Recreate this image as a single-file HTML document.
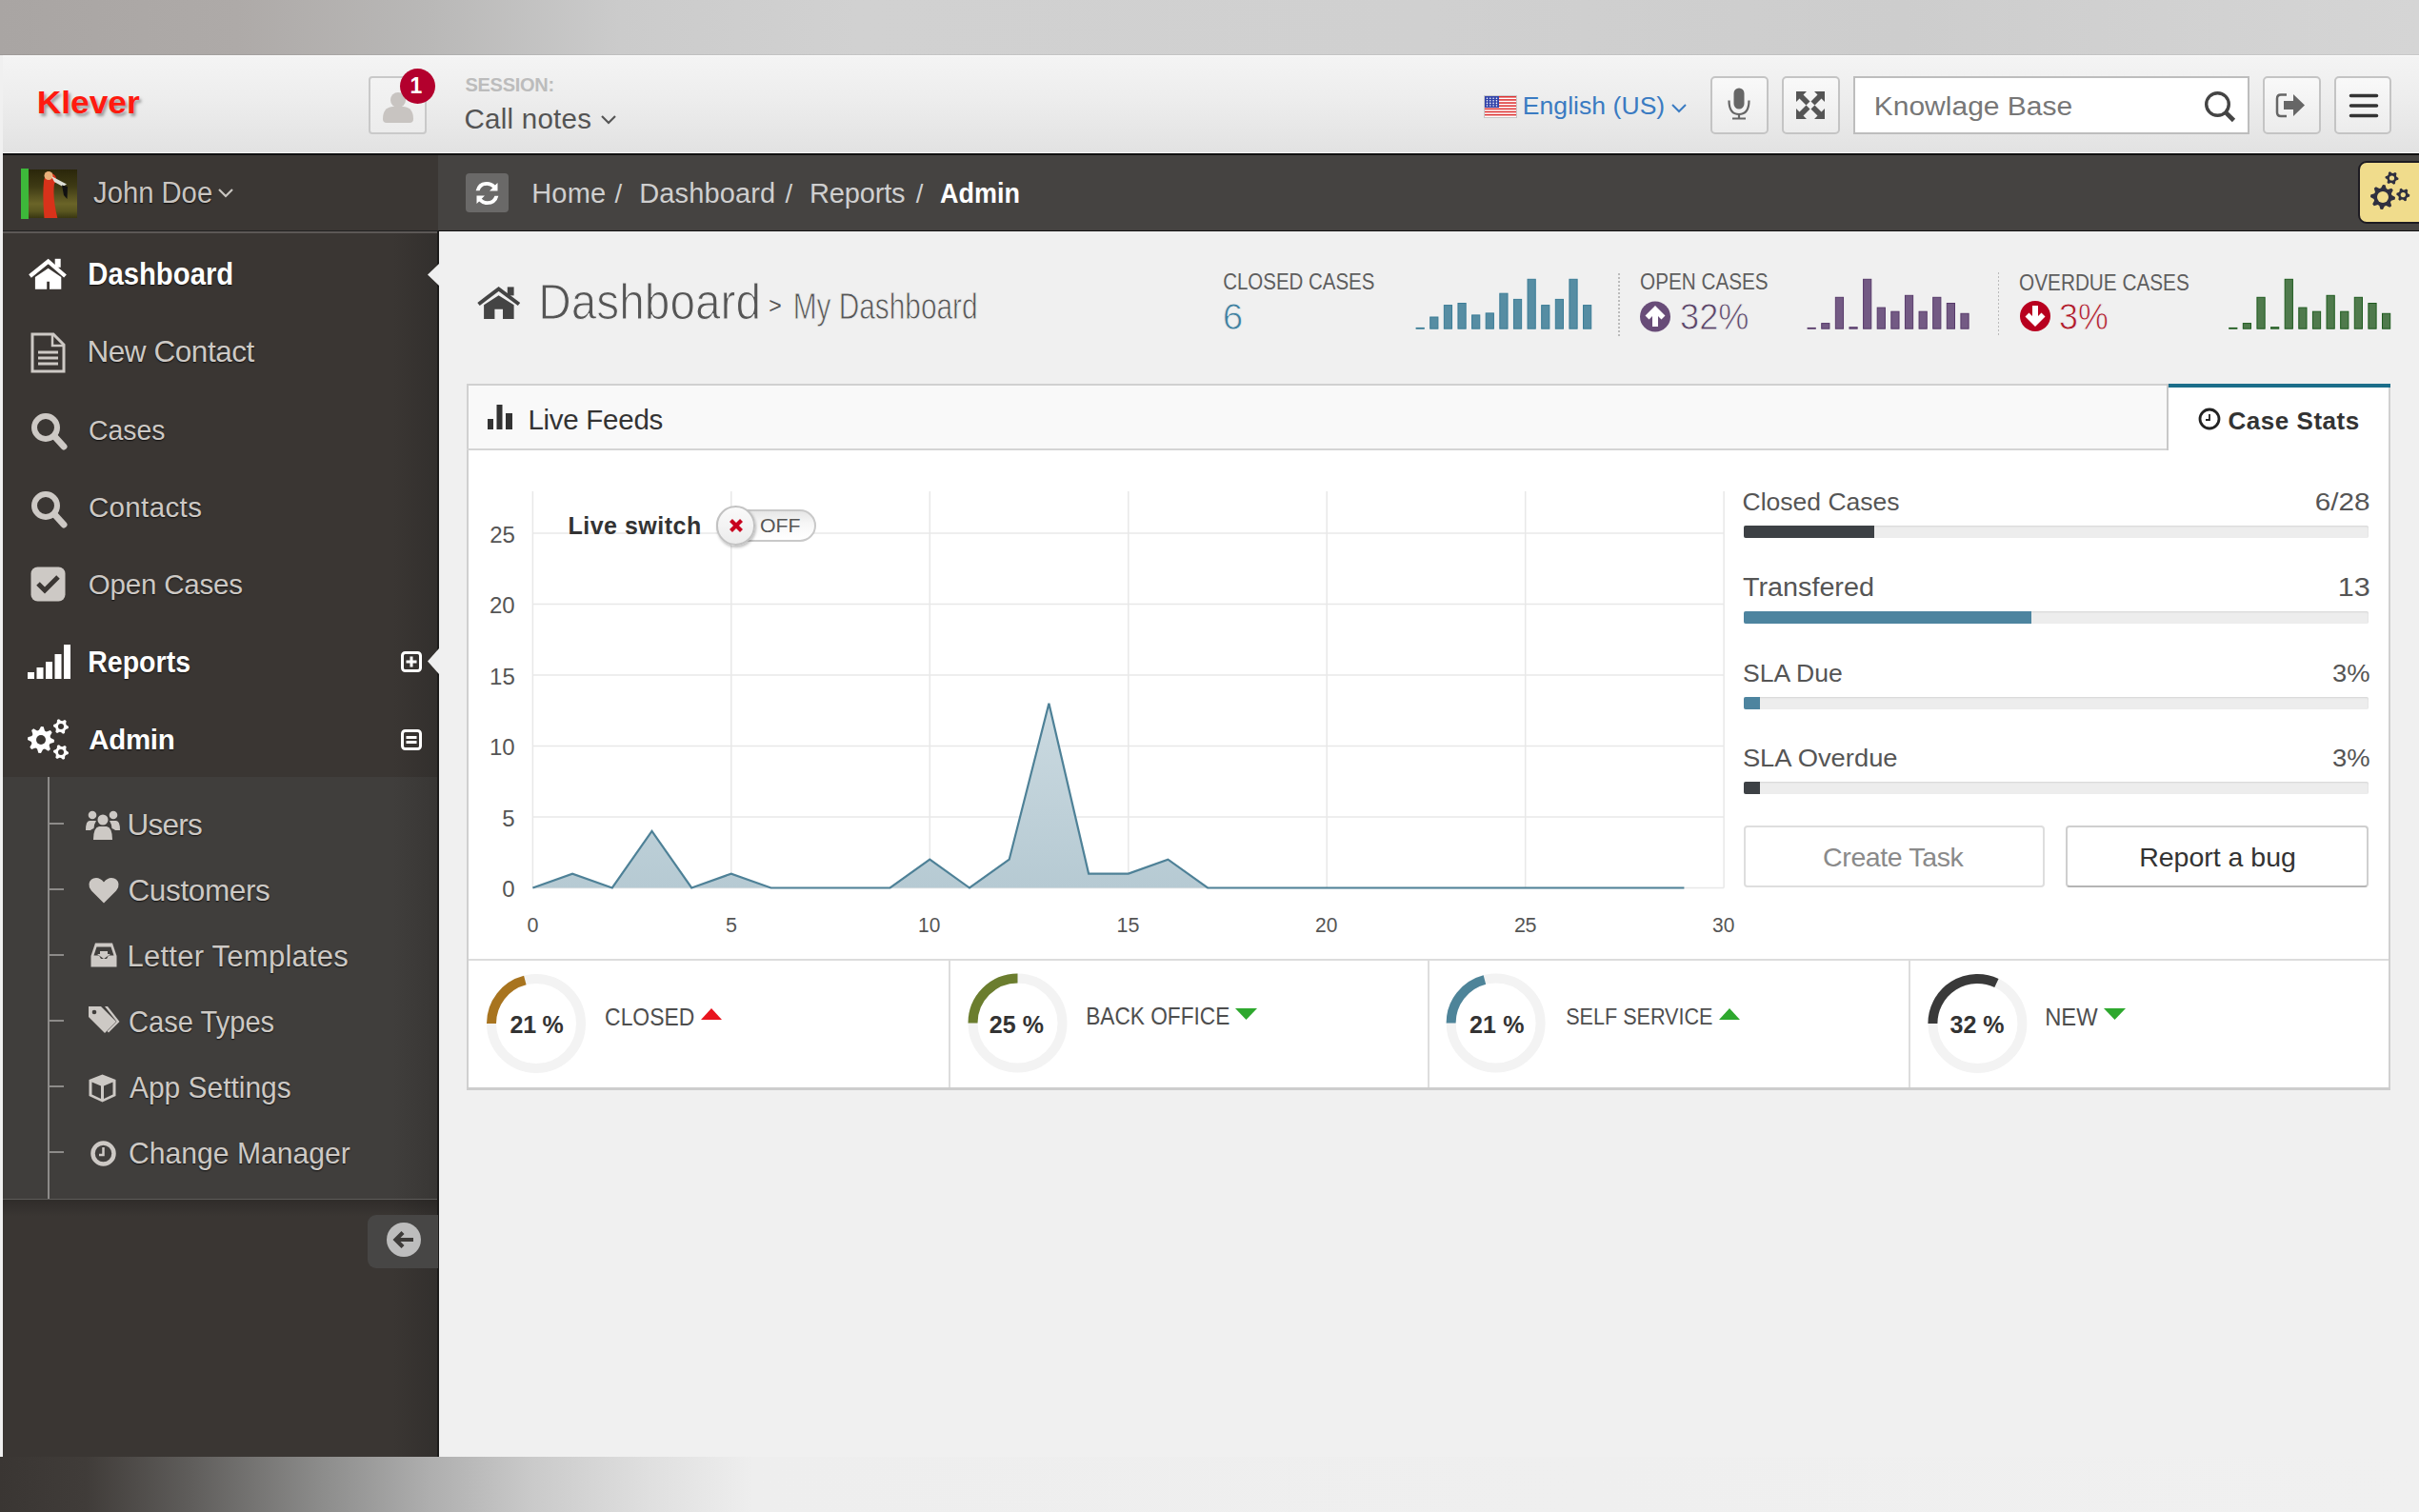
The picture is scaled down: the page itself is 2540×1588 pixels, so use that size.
<!DOCTYPE html><html><head><meta charset="utf-8"><style>
html,body{margin:0;padding:0;}
body{width:2540px;height:1588px;position:relative;overflow:hidden;background:#f0f0f0;font-family:"Liberation Sans",sans-serif;}
body>div,body>span,body>svg{position:absolute;}
span{line-height:1;white-space:nowrap;}
</style></head><body>
<div style="left:0px;top:0px;width:2540px;height:58px;background:linear-gradient(90deg,#a9a5a3 0px,#aeaaa8 250px,#b9b8b7 450px,#cbcbcb 650px,#d1d1d1 900px,#d0d0d0 1500px,#cdcdcd 2000px,#d5d5d5 2540px);"></div>
<div style="left:0px;top:57px;width:2540px;height:1px;background:rgba(0,0,0,0.06);"></div>
<div style="left:0px;top:58px;width:2540px;height:103px;background:linear-gradient(#f4f4f4,#ededed 45%,#e2e2e2);"></div>
<div style="left:0px;top:58px;width:2540px;height:1px;background:#fbfbfb;"></div>
<div style="left:0px;top:159.5px;width:2540px;height:1.5px;background:#f4f4f4;"></div>
<div style="left:0px;top:58px;width:3px;height:1472px;background:#f0f0f0;"></div>
<div style="left:3px;top:161px;width:457px;height:82px;background:#3b3734;"></div>
<div style="left:460px;top:161px;width:2080px;height:82px;background:#454341;"></div>
<div style="left:3px;top:161px;width:2537px;height:2px;background:#111;"></div>
<div style="left:460px;top:242px;width:2080px;height:1px;background:#111;"></div>
<div style="left:3px;top:242px;width:457px;height:1px;background:#222;"></div>
<div style="left:3px;top:243px;width:457px;height:2px;background:#5c5856;"></div>
<div style="left:3px;top:245px;width:457px;height:1285px;background:linear-gradient(90deg,#3a3633 0,#3a3633 410px,#322f2d 458px);"></div>
<div style="left:3px;top:816px;width:457px;height:443px;background:linear-gradient(90deg,#403e3c 0,#403e3c 410px,#383634 458px);"></div>
<div style="left:3px;top:1259px;width:457px;height:1px;background:#5d5b59;"></div>
<div style="left:3px;top:1260px;width:456px;height:18px;background:linear-gradient(rgba(0,0,0,0.18),rgba(0,0,0,0));"></div>
<div style="left:459px;top:243px;width:2px;height:1287px;background:#1c1b1a;"></div>
<div style="left:0px;top:1530px;width:2540px;height:58px;background:linear-gradient(90deg,#3a3633 0px,#403c39 90px,#5f5d5b 200px,#8d8d8c 340px,#aeaeae 450px,#cacaca 560px,#dfdfdf 680px,#eeeeee 790px,#f0f0f0 2540px);"></div>
<span style="left:38.8px;top:92px;font-size:32.5px;letter-spacing:0.00px;font-weight:bold;color:#ff1a0f;transform:scaleX(1.0853);transform-origin:2.25px 0;text-shadow:2px 3px 3px rgba(0,0,0,0.35);">Klever</span>
<div style="left:387px;top:80px;width:61px;height:61px;box-sizing:border-box;border:2px solid #c9c9c9;border-radius:4px;background:linear-gradient(#f3f3f3,#ececec);"></div>
<svg style="left:400px;top:95px;" width="36" height="36" viewBox="0 0 36 36"><circle cx="18" cy="10" r="8" fill="#c8c4c1"/><path d="M2 30 Q2 18 12 17 L24 17 Q34 18 34 30 Q34 34 30 34 L6 34 Q2 34 2 30Z" fill="#c8c4c1"/></svg>
<div style="left:419.5px;top:71.5px;width:37px;height:37px;border-radius:50%;background:#b3002d;"></div>
<span style="left:430.5px;top:79px;font-size:23.0px;letter-spacing:0.00px;font-weight:bold;color:#fff;">1</span>
<span style="left:488.5px;top:79px;font-size:20.0px;letter-spacing:-0.29px;font-weight:bold;color:#bcbcbc;">SESSION:</span>
<span style="left:487.5px;top:110px;font-size:29.5px;letter-spacing:0.25px;font-weight:normal;color:#545454;">Call notes</span>
<svg style="left:630px;top:119px;" width="18" height="13" viewBox="0 0 18 13"><path d="M2 3 L9 10 L16 3" stroke="#555" stroke-width="2.2" fill="none"/></svg>
<svg style="left:1559px;top:101px;box-shadow:0 0 0 1px rgba(0,0,0,0.15);" width="33" height="22" viewBox="0 0 33 22"><rect width="33" height="22" fill="#fff"/><rect y="0.00" width="33" height="1.57" fill="#d33"/><rect y="3.14" width="33" height="1.57" fill="#d33"/><rect y="6.29" width="33" height="1.57" fill="#d33"/><rect y="9.43" width="33" height="1.57" fill="#d33"/><rect y="12.57" width="33" height="1.57" fill="#d33"/><rect y="15.71" width="33" height="1.57" fill="#d33"/><rect y="18.86" width="33" height="1.57" fill="#d33"/><rect width="15" height="12" fill="#3344aa"/><circle cx="2.5" cy="2.2" r="0.8" fill="#fff"/><circle cx="5.8" cy="2.2" r="0.8" fill="#fff"/><circle cx="9.1" cy="2.2" r="0.8" fill="#fff"/><circle cx="12.4" cy="2.2" r="0.8" fill="#fff"/><circle cx="2.5" cy="4.8" r="0.8" fill="#fff"/><circle cx="5.8" cy="4.8" r="0.8" fill="#fff"/><circle cx="9.1" cy="4.8" r="0.8" fill="#fff"/><circle cx="12.4" cy="4.8" r="0.8" fill="#fff"/><circle cx="2.5" cy="7.4" r="0.8" fill="#fff"/><circle cx="5.8" cy="7.4" r="0.8" fill="#fff"/><circle cx="9.1" cy="7.4" r="0.8" fill="#fff"/><circle cx="12.4" cy="7.4" r="0.8" fill="#fff"/><circle cx="2.5" cy="10.0" r="0.8" fill="#fff"/><circle cx="5.8" cy="10.0" r="0.8" fill="#fff"/><circle cx="9.1" cy="10.0" r="0.8" fill="#fff"/><circle cx="12.4" cy="10.0" r="0.8" fill="#fff"/></svg>
<span style="left:1598.8px;top:98.4px;font-size:26.5px;letter-spacing:0.06px;font-weight:normal;color:#3a7bc2;">English (US)</span>
<svg style="left:1754px;top:107px;" width="18" height="13" viewBox="0 0 18 13"><path d="M2 3 L9 10 L16 3" stroke="#3a7bc2" stroke-width="2" fill="none"/></svg>
<div style="left:1795.5px;top:80px;width:61.09999999999991px;height:61px;box-sizing:border-box;border:2px solid #c4c4c4;border-radius:5px;background:linear-gradient(#f9f9f9,#ececec);"></div>
<svg style="left:1812px;top:91px;" width="28" height="35" viewBox="0 0 28 35"><rect x="8.5" y="1.5" width="11" height="22" rx="5.5" fill="#666"/><path d="M3.5 14.5 Q3.5 29 14 29 Q24.5 29 24.5 14.5" stroke="#666" stroke-width="2.2" fill="none"/><path d="M14 29 V33 M7 33.5 H21" stroke="#666" stroke-width="2.2"/></svg>
<div style="left:1870.6px;top:80px;width:61.100000000000136px;height:61px;box-sizing:border-box;border:2px solid #c4c4c4;border-radius:5px;background:linear-gradient(#f9f9f9,#ececec);"></div>
<svg style="left:1885px;top:95px;" width="32" height="31" viewBox="0 0 32 31"><g fill="#555"><path d="M1 1 H12 L8.5 4.5 L15.5 11.5 L11.5 15.5 L4.5 8.5 L1 12Z"/><path d="M31 1 V12 L27.5 8.5 L20.5 15.5 L16.5 11.5 L23.5 4.5 L20 1Z"/><path d="M1 30 V19 L4.5 22.5 L11.5 15.5 L15.5 19.5 L8.5 26.5 L12 30Z"/><path d="M31 30 H20 L23.5 26.5 L16.5 19.5 L20.5 15.5 L27.5 22.5 L31 19Z"/></g></svg>
<div style="left:1945.6px;top:80px;width:416.0999999999999px;height:61.400000000000006px;box-sizing:border-box;border:2px solid #bdbdbd;background:#fff;"></div>
<span style="left:1967.8px;top:98.9px;font-size:27.0px;letter-spacing:0.00px;font-weight:normal;color:#777;transform:scaleX(1.1109);transform-origin:2.25px 0;">Knowlage Base</span>
<svg style="left:2312px;top:94px;" width="38" height="37" viewBox="0 0 38 37"><circle cx="16.5" cy="15.5" r="11.8" stroke="#444" stroke-width="3.4" fill="none"/><path d="M24.8 23.8 L33.5 32.5" stroke="#444" stroke-width="4.6" stroke-linecap="butt"/></svg>
<div style="left:2375.8px;top:80px;width:61.0px;height:61px;box-sizing:border-box;border:2px solid #c4c4c4;border-radius:5px;background:linear-gradient(#f9f9f9,#ececec);"></div>
<svg style="left:2388px;top:97px;" width="36" height="28" viewBox="0 0 36 28"><path d="M13 2.5 H7 Q3 2.5 3 6.5 V21 Q3 25 7 25 H13" stroke="#666" stroke-width="2.5" fill="none"/><path d="M10 9 H20 V2 L32 13.5 L20 25 V18 H10Z" fill="#666"/></svg>
<div style="left:2450.7px;top:80px;width:60.30000000000018px;height:61px;box-sizing:border-box;border:2px solid #c4c4c4;border-radius:5px;background:linear-gradient(#f9f9f9,#ececec);"></div>
<svg style="left:2465px;top:97px;" width="34" height="28" viewBox="0 0 34 28"><g stroke="#333" stroke-width="3.6" stroke-linecap="round"><path d="M3.5 3.5 H30.5 M3.5 14 H30.5 M3.5 24.5 H30.5"/></g></svg>
<div style="left:22px;top:177px;width:7.5px;height:53px;background:#3db83a;"></div>
<svg style="left:29.8px;top:177.7px;" width="51.6" height="51.6" viewBox="0 0 51.6 51.6"><defs><linearGradient id="av" x1="0" y1="0" x2="0" y2="1"><stop offset="0" stop-color="#2a260a"/><stop offset="0.35" stop-color="#3e3a14"/><stop offset="0.7" stop-color="#6a6428"/><stop offset="0.85" stop-color="#5a5620"/><stop offset="1" stop-color="#363410"/></linearGradient></defs><rect width="51.6" height="51.6" fill="url(#av)"/><path d="M16.5 51.6 Q14.5 28 16 12 Q18 3 24 4 Q29 5 29.5 12 L27 15 Q25 30 30.5 51.6Z" fill="#d8321a"/><circle cx="21" cy="6.5" r="4.5" fill="#e9b07a"/><path d="M24 7 L40 15.5 L36 18 L27 13Z" fill="#dfe0d8"/><path d="M35 16.5 L41 18 L40.5 31 L37 27Z" fill="#111"/></svg>
<span style="left:97.5px;top:187.3px;font-size:31.0px;letter-spacing:0.00px;font-weight:normal;color:#c9c5c1;transform:scaleX(0.9427);transform-origin:0.50px 0;text-shadow:0 1px 1.5px rgba(0,0,0,0.75);">John Doe</span>
<svg style="left:228px;top:196px;" width="18" height="13" viewBox="0 0 18 13"><path d="M2 3 L9 10 L16 3" stroke="#c9c5c1" stroke-width="2.2" fill="none"/></svg>
<div style="left:488.8px;top:181.7px;width:45.599999999999966px;height:41.60000000000002px;background:#6a6968;border-radius:4px;"></div>
<svg style="left:497px;top:188px;" width="30" height="30" viewBox="0 0 30 30"><g fill="#fff"><path d="M25.5 4 V12.5 H17 L20.3 9.2 Q17.8 6.7 14.5 6.7 Q8.5 6.7 6.6 12.2 H2.6 Q4.8 3 14.5 3 Q19.4 3 22.9 6.6Z"/><path d="M3.5 26 V17.5 H12 L8.7 20.8 Q11.2 23.3 14.5 23.3 Q20.5 23.3 22.4 17.8 H26.4 Q24.2 27 14.5 27 Q9.6 27 6.1 23.4Z"/></g></svg>
<span style="left:558.2px;top:189.4px;font-size:29.0px;letter-spacing:0.22px;font-weight:normal;color:#cfcfcf;">Home</span>
<span style="left:645.4px;top:190.4px;font-size:27.5px;letter-spacing:0.00px;font-weight:normal;color:#cfcfcf;">/</span>
<span style="left:671.2px;top:189.4px;font-size:29.0px;letter-spacing:0.14px;font-weight:normal;color:#cfcfcf;">Dashboard</span>
<span style="left:824.6px;top:190.4px;font-size:27.5px;letter-spacing:0.00px;font-weight:normal;color:#cfcfcf;">/</span>
<span style="left:850.1px;top:189.4px;font-size:29.0px;letter-spacing:-0.17px;font-weight:normal;color:#cfcfcf;">Reports</span>
<span style="left:961.7px;top:190.4px;font-size:27.5px;letter-spacing:0.00px;font-weight:normal;color:#cfcfcf;">/</span>
<span style="left:987.0px;top:189.4px;font-size:29.0px;letter-spacing:0.00px;font-weight:bold;color:#ffffff;transform:scaleX(0.9299);transform-origin:0.75px 0;">Admin</span>
<div style="left:2475.7px;top:169.2px;width:84.30000000000018px;height:66.10000000000002px;box-sizing:border-box;border:2px solid #1d1b22;border-radius:9px;background:#f0dc8c;"></div>
<svg style="left:2484px;top:178px;" width="56" height="48" viewBox="0 0 56 48"><polygon points="31.00,29.00 30.75,31.54 26.89,32.68 26.00,34.34 27.19,38.19 25.22,39.81 21.68,37.89 19.88,38.44 18.00,42.00 15.46,41.75 14.32,37.89 12.66,37.00 8.81,38.19 7.19,36.22 9.11,32.68 8.56,30.88 5.00,29.00 5.25,26.46 9.11,25.32 10.00,23.66 8.81,19.81 10.78,18.19 14.32,20.11 16.12,19.56 18.00,16.00 20.54,16.25 21.68,20.11 23.34,21.00 27.19,19.81 28.81,21.78 26.89,25.32 27.44,27.12" fill="#2f3040"/><circle cx="18" cy="29" r="6" fill="#f0dc8c"/><polygon points="34.50,9.00 34.26,10.81 31.99,11.59 31.16,12.66 31.00,15.06 29.31,15.76 27.50,14.18 26.16,14.00 24.00,15.06 22.55,13.95 23.01,11.59 22.50,10.34 20.50,9.00 20.74,7.19 23.01,6.41 23.84,5.34 24.00,2.94 25.69,2.24 27.50,3.82 28.84,4.00 31.00,2.94 32.45,4.05 31.99,6.41 32.50,7.66" fill="#2f3040"/><circle cx="27.5" cy="9" r="2.6" fill="#f0dc8c"/><polygon points="46.30,26.60 46.06,28.41 43.79,29.19 42.96,30.26 42.80,32.66 41.11,33.36 39.30,31.78 37.96,31.60 35.80,32.66 34.35,31.55 34.81,29.19 34.30,27.94 32.30,26.60 32.54,24.79 34.81,24.01 35.64,22.94 35.80,20.54 37.49,19.84 39.30,21.42 40.64,21.60 42.80,20.54 44.25,21.65 43.79,24.01 44.30,25.26" fill="#2f3040"/><circle cx="39.3" cy="26.6" r="2.6" fill="#f0dc8c"/></svg>
<svg style="left:30px;top:270px;" width="40" height="36" viewBox="0 0 40 36"><g fill="#fff"><path d="M1.5 20 L20.6 4.5 L38.5 20" stroke="#fff" stroke-width="4.2" fill="none"/><rect x="27.7" y="1.8" width="6" height="9"/><path d="M6.9 20.9 L20.6 11.7 L34.3 20.9 V33.7 H22 V25.7 H19.2 V33.7 H6.9Z"/></g></svg>
<span style="left:91.8px;top:271px;font-size:33.5px;letter-spacing:0.00px;font-weight:bold;color:#ffffff;transform:scaleX(0.8739);transform-origin:2.25px 0;text-shadow:0 1px 1.5px rgba(0,0,0,0.75);">Dashboard</span>
<svg style="left:31px;top:349px;" width="40" height="44" viewBox="0 0 40 44"><path d="M3 2 H25 L36 13 V41 H3Z" stroke="#cdc9c5" stroke-width="3" fill="none" stroke-linejoin="miter"/><path d="M24 2 V14 H36" stroke="#cdc9c5" stroke-width="2.5" fill="none"/><path d="M9 21 H30 M9 27 H30 M9 33 H30" stroke="#cdc9c5" stroke-width="3"/></svg>
<span style="left:91.5px;top:354.3px;font-size:31.5px;letter-spacing:-0.45px;font-weight:normal;color:#cdc9c5;text-shadow:0 1px 1.5px rgba(0,0,0,0.75);">New Contact</span>
<svg style="left:31px;top:431.5px;" width="40" height="42" viewBox="0 0 40 42"><circle cx="17" cy="17" r="12" stroke="#cdc9c5" stroke-width="6" fill="none"/><path d="M26 26 L36 37" stroke="#cdc9c5" stroke-width="7" stroke-linecap="round"/></svg>
<span style="left:92.5px;top:436.5px;font-size:29.5px;letter-spacing:0.00px;font-weight:normal;color:#cdc9c5;transform:scaleX(0.9630);transform-origin:1.50px 0;text-shadow:0 1px 1.5px rgba(0,0,0,0.75);">Cases</span>
<svg style="left:31px;top:514px;" width="40" height="42" viewBox="0 0 40 42"><circle cx="17" cy="17" r="12" stroke="#cdc9c5" stroke-width="6" fill="none"/><path d="M26 26 L36 37" stroke="#cdc9c5" stroke-width="7" stroke-linecap="round"/></svg>
<span style="left:92.9px;top:518px;font-size:29.5px;letter-spacing:0.37px;font-weight:normal;color:#cdc9c5;text-shadow:0 1px 1.5px rgba(0,0,0,0.75);">Contacts</span>
<svg style="left:32px;top:595px;" width="37" height="37" viewBox="0 0 37 37"><rect x="0.5" y="0.5" width="36" height="36" rx="7" fill="#cdc9c5"/><path d="M8 18 L15 25 L29 11" stroke="#3a3633" stroke-width="5" fill="none"/></svg>
<span style="left:92.8px;top:599px;font-size:29.5px;letter-spacing:-0.19px;font-weight:normal;color:#cdc9c5;text-shadow:0 1px 1.5px rgba(0,0,0,0.75);">Open Cases</span>
<svg style="left:28.8px;top:677px;" width="45" height="36" viewBox="0 0 45 36"><g fill="#fff"><rect x="0" y="29" width="7" height="7"/><rect x="9.5" y="24" width="7" height="12"/><rect x="19" y="18" width="7" height="18"/><rect x="28.5" y="10" width="7" height="26"/><rect x="38" y="0" width="7" height="36"/></g></svg>
<span style="left:92.0px;top:680px;font-size:31.0px;letter-spacing:0.00px;font-weight:bold;color:#ffffff;transform:scaleX(0.9211);transform-origin:2.00px 0;text-shadow:0 1px 1.5px rgba(0,0,0,0.75);">Reports</span>
<svg style="left:420.5px;top:683.5px;" width="22" height="22" viewBox="0 0 22 22"><rect x="1.5" y="1.5" width="19" height="19" rx="3" stroke="#fff" stroke-width="3" fill="none"/><path d="M5.5 11 H16.5 M11 5.5 V16.5" stroke="#fff" stroke-width="3"/></svg>
<svg style="left:28px;top:755px;" width="46" height="43" viewBox="0 0 46 43"><polygon points="29.00,22.00 28.73,24.73 24.57,25.96 23.61,27.76 24.90,31.90 22.78,33.64 18.96,31.57 17.02,32.16 15.00,36.00 12.27,35.73 11.04,31.57 9.24,30.61 5.10,31.90 3.36,29.78 5.43,25.96 4.84,24.02 1.00,22.00 1.27,19.27 5.43,18.04 6.39,16.24 5.10,12.10 7.22,10.36 11.04,12.43 12.98,11.84 15.00,8.00 17.73,8.27 18.96,12.43 20.76,13.39 24.90,12.10 26.64,14.22 24.57,18.04 25.16,19.98" fill="#fff"/><circle cx="15" cy="22" r="5" fill="#3a3633"/><polygon points="44.00,8.00 43.73,10.07 41.13,10.96 40.19,12.19 40.00,14.93 38.07,15.73 36.00,13.92 34.47,13.72 32.00,14.93 30.34,13.66 30.87,10.96 30.28,9.53 28.00,8.00 28.27,5.93 30.87,5.04 31.81,3.81 32.00,1.07 33.93,0.27 36.00,2.08 37.53,2.28 40.00,1.07 41.66,2.34 41.13,5.04 41.72,6.47" fill="#fff"/><circle cx="36" cy="8" r="3" fill="#3a3633"/><polygon points="44.00,35.00 43.73,37.07 41.13,37.96 40.19,39.19 40.00,41.93 38.07,42.73 36.00,40.92 34.47,40.72 32.00,41.93 30.34,40.66 30.87,37.96 30.28,36.53 28.00,35.00 28.27,32.93 30.87,32.04 31.81,30.81 32.00,28.07 33.93,27.27 36.00,29.08 37.53,29.28 40.00,28.07 41.66,29.34 41.13,32.04 41.72,33.47" fill="#fff"/><circle cx="36" cy="35" r="3" fill="#3a3633"/></svg>
<span style="left:93.2px;top:762px;font-size:29.5px;letter-spacing:-0.31px;font-weight:bold;color:#ffffff;text-shadow:0 1px 1.5px rgba(0,0,0,0.75);">Admin</span>
<svg style="left:420.5px;top:765.5px;" width="22" height="22" viewBox="0 0 22 22"><rect x="1.5" y="1.5" width="19" height="19" rx="3" stroke="#fff" stroke-width="3" fill="none"/><path d="M5.5 8.5 H16.5 M5.5 13.5 H16.5" stroke="#fff" stroke-width="3"/></svg>
<svg style="left:448.5px;top:277px;" width="12" height="23" viewBox="0 0 12 23"><path d="M12 0 L0 11.5 L12 23Z" fill="#efefef"/></svg>
<svg style="left:448.5px;top:681px;" width="12" height="27" viewBox="0 0 12 27"><path d="M12 0 L0 13.5 L12 27Z" fill="#efefef"/></svg>
<div style="left:50px;top:816px;width:2px;height:443px;background:#8d8b89;"></div>
<div style="left:52px;top:864px;width:15px;height:2px;background:#8d8b89;"></div>
<div style="left:52px;top:933px;width:15px;height:2px;background:#8d8b89;"></div>
<div style="left:52px;top:1002px;width:15px;height:2px;background:#8d8b89;"></div>
<div style="left:52px;top:1071px;width:15px;height:2px;background:#8d8b89;"></div>
<div style="left:52px;top:1140px;width:15px;height:2px;background:#8d8b89;"></div>
<div style="left:52px;top:1209px;width:15px;height:2px;background:#8d8b89;"></div>
<svg style="left:90px;top:850px;" width="36" height="33" viewBox="0 0 36 33"><g fill="#cdc9c5"><circle cx="18" cy="11" r="5.5"/><path d="M8 32 Q8 19 14 18 H22 Q28 19 28 32Z"/><circle cx="7" cy="6" r="4.3"/><path d="M0 22 Q0 12 4 12 H11 Q9 15 8.5 20 Q6 21 5 22Z"/><circle cx="29" cy="6" r="4.3"/><path d="M36 22 Q36 12 32 12 H25 Q27 15 27.5 20 Q30 21 31 22Z"/></g></svg>
<span style="left:133.5px;top:851.3px;font-size:31.5px;letter-spacing:-0.74px;font-weight:normal;color:#cdc9c5;text-shadow:0 1px 1.5px rgba(0,0,0,0.75);">Users</span>
<svg style="left:92.5px;top:921px;" width="32" height="28" viewBox="0 0 32 28"><path d="M16 27.5 L3 14.5 Q0 11 0.5 7.5 Q1.5 1 8 1 Q12.5 1 16 5.5 Q19.5 1 24 1 Q30.5 1 31.5 7.5 Q32 11 29 14.5Z" fill="#cdc9c5"/></svg>
<span style="left:134.5px;top:920px;font-size:31.5px;letter-spacing:-0.38px;font-weight:normal;color:#cdc9c5;text-shadow:0 1px 1.5px rgba(0,0,0,0.75);">Customers</span>
<svg style="left:94.5px;top:990px;" width="28" height="26" viewBox="0 0 28 26"><path d="M5 0.5 H23 L27.5 14 V25.5 H0.5 V14Z" fill="#cdc9c5"/><path d="M6.5 4.5 H21.5 L24.5 13.5 H19 L17 17 H11 L9 13.5 H3.5Z" fill="#403e3c"/><path d="M10 9 H18 V12 H21 L14 17 L7 12 H10Z" fill="#cdc9c5"/></svg>
<span style="left:133.5px;top:988.7px;font-size:31.0px;letter-spacing:0.25px;font-weight:normal;color:#cdc9c5;text-shadow:0 1px 1.5px rgba(0,0,0,0.75);">Letter Templates</span>
<svg style="left:91.5px;top:1056px;" width="34" height="29" viewBox="0 0 34 29"><path d="M1 1 H14 L30 17 L18 29 L1 12Z" fill="#cdc9c5"/><circle cx="7" cy="7" r="2.3" fill="#403e3c"/><path d="M18 1 H21 L33.5 17 L22 28.5 L20.5 27 L30.5 17Z" fill="#cdc9c5"/></svg>
<span style="left:134.5px;top:1057.6px;font-size:31.5px;letter-spacing:0.00px;font-weight:normal;color:#cdc9c5;transform:scaleX(0.9231);transform-origin:1.50px 0;text-shadow:0 1px 1.5px rgba(0,0,0,0.75);">Case Types</span>
<svg style="left:92.5px;top:1128px;" width="29" height="30" viewBox="0 0 29 30"><path d="M14.5 0.5 L28.5 6 V23 L14.5 29.5 L0.5 23 V6Z" fill="#cdc9c5"/><path d="M3.5 8.5 L13 12.5 V26 L3.5 21.5Z M16 12.5 L25.5 8.5 V21.5 L16 26Z" fill="#403e3c"/><path d="M5 6.5 L14.5 3 L24 6.5 L14.5 10.5Z" fill="#403e3c" opacity="0.0"/></svg>
<span style="left:136.0px;top:1127px;font-size:31.5px;letter-spacing:0.00px;font-weight:normal;color:#cdc9c5;transform:scaleX(0.9499);transform-origin:0.00px 0;text-shadow:0 1px 1.5px rgba(0,0,0,0.75);">App Settings</span>
<svg style="left:94.5px;top:1197.5px;" width="27" height="27" viewBox="0 0 27 27"><circle cx="13.5" cy="13.5" r="11" stroke="#cdc9c5" stroke-width="4.5" fill="none"/><path d="M13.5 7 V15 H9" stroke="#cdc9c5" stroke-width="2.5" fill="none"/></svg>
<span style="left:134.5px;top:1195.5px;font-size:31.5px;letter-spacing:0.00px;font-weight:normal;color:#cdc9c5;transform:scaleX(0.9565);transform-origin:1.50px 0;text-shadow:0 1px 1.5px rgba(0,0,0,0.75);">Change Manager</span>
<div style="left:386px;top:1276px;width:74px;height:56px;background:#474645;border-radius:9px 0 0 9px;"></div>
<svg style="left:405.5px;top:1284.3px;" width="36" height="36" viewBox="0 0 36 36"><circle cx="18" cy="18" r="18" fill="#bdbdbd"/><path d="M6.5 18 L15.5 9 L18.5 12 L14.5 16 H28 V20 H14.5 L18.5 24 L15.5 27Z" fill="#3d3b39"/></svg>
<svg style="left:500px;top:300px;" width="47" height="36" viewBox="0 0 47 36"><g fill="#444"><path d="M2.5 19.5 L23.6 3.5 L45 19.5" stroke="#444" stroke-width="4" fill="none"/><rect x="32.8" y="1.4" width="6.8" height="9"/><path d="M8.1 20.3 L23.6 10.2 L39.6 20.3 V34.9 H28 V24.8 H19.4 V34.9 H8.1Z"/></g></svg>
<span style="left:564.8px;top:292.25px;font-size:51.0px;letter-spacing:0.00px;font-weight:normal;color:#555;transform:scaleX(0.9372);transform-origin:4.25px 0;-webkit-text-stroke:1.1px #efefef;">Dashboard</span>
<span style="left:807.2px;top:310px;font-size:23.0px;letter-spacing:-7.00px;font-weight:normal;color:#555;">&gt;</span>
<span style="left:831.5px;top:302.6px;font-size:38.0px;letter-spacing:0.00px;font-weight:normal;color:#555;transform:scaleX(0.7851);transform-origin:3.00px 0;-webkit-text-stroke:0.8px #efefef;">My Dashboard</span>
<span style="left:1284.0px;top:285.4px;font-size:23.0px;letter-spacing:0.00px;font-weight:normal;color:#5e5e5e;transform:scaleX(0.8901);transform-origin:1.25px 0;">CLOSED CASES</span>
<span style="left:1283.7px;top:314.1px;font-size:38.5px;letter-spacing:0.00px;font-weight:normal;color:#3f80a0;-webkit-text-stroke:0.8px #efefef;">6</span>
<div style="left:1699px;top:286.5px;width:2px;height:66.19999999999999px;background:repeating-linear-gradient(#bbb 0,#bbb 2px,transparent 2px,transparent 4px);width:1.5px;"></div>
<span style="left:1721.7px;top:285.3px;font-size:23.5px;letter-spacing:0.00px;font-weight:normal;color:#5e5e5e;transform:scaleX(0.8803);transform-origin:1.00px 0;">OPEN CASES</span>
<svg style="left:1722px;top:315.5px;" width="32" height="33" viewBox="0 0 32 33"><circle cx="16" cy="16.5" r="16" fill="#684c78"/><path d="M16 5 L26.5 15.5 L22.5 19.5 L19 16 V27 H13 V16 L9.5 19.5 L5.5 15.5Z" fill="#fff"/></svg>
<span style="left:1763.5px;top:314.1px;font-size:38.5px;letter-spacing:0.00px;font-weight:normal;color:#5a4468;transform:scaleX(0.9387);transform-origin:1.50px 0;-webkit-text-stroke:0.8px #efefef;">32%</span>
<div style="left:2097.5px;top:285.9px;width:1.5px;height:66.10000000000002px;background:repeating-linear-gradient(#bbb 0,#bbb 2px,transparent 2px,transparent 4px);"></div>
<span style="left:2119.5px;top:285.5px;font-size:23.5px;letter-spacing:0.00px;font-weight:normal;color:#5e5e5e;transform:scaleX(0.8824);transform-origin:1.00px 0;">OVERDUE CASES</span>
<svg style="left:2121px;top:315.8px;" width="32" height="32" viewBox="0 0 32 32"><circle cx="16" cy="16" r="16" fill="#b8001f"/><path d="M16 27 L26.5 16.5 L22.5 12.5 L19 16 V5 H13 V16 L9.5 12.5 L5.5 16.5Z" fill="#fff"/></svg>
<span style="left:2161.9px;top:313.3px;font-size:39.0px;letter-spacing:0.00px;font-weight:normal;color:#b01828;transform:scaleX(0.9178);transform-origin:1.50px 0;-webkit-text-stroke:0.8px #efefef;">3%</span>
<svg style="left:0px;top:0px" width="2540" height="400"><rect x="1487.10" y="344.40" width="8.2" height="0.80" fill="#568da3" stroke="#3b7c96" stroke-width="1"/><rect x="1501.72" y="333.00" width="8.2" height="12.20" fill="#568da3" stroke="#3b7c96" stroke-width="1"/><rect x="1516.34" y="320.60" width="8.2" height="24.60" fill="#568da3" stroke="#3b7c96" stroke-width="1"/><rect x="1530.96" y="318.50" width="8.2" height="26.70" fill="#568da3" stroke="#3b7c96" stroke-width="1"/><rect x="1545.58" y="330.90" width="8.2" height="14.30" fill="#568da3" stroke="#3b7c96" stroke-width="1"/><rect x="1560.20" y="328.90" width="8.2" height="16.30" fill="#568da3" stroke="#3b7c96" stroke-width="1"/><rect x="1574.82" y="308.20" width="8.2" height="37.00" fill="#568da3" stroke="#3b7c96" stroke-width="1"/><rect x="1589.44" y="314.40" width="8.2" height="30.80" fill="#568da3" stroke="#3b7c96" stroke-width="1"/><rect x="1604.06" y="293.30" width="8.2" height="51.90" fill="#568da3" stroke="#3b7c96" stroke-width="1"/><rect x="1618.68" y="320.60" width="8.2" height="24.60" fill="#568da3" stroke="#3b7c96" stroke-width="1"/><rect x="1633.30" y="314.40" width="8.2" height="30.80" fill="#568da3" stroke="#3b7c96" stroke-width="1"/><rect x="1647.92" y="293.30" width="8.2" height="51.90" fill="#568da3" stroke="#3b7c96" stroke-width="1"/><rect x="1662.54" y="320.60" width="8.2" height="24.60" fill="#568da3" stroke="#3b7c96" stroke-width="1"/><rect x="1898.10" y="344.40" width="8.2" height="0.80" fill="#735a84" stroke="#573a6a" stroke-width="1"/><rect x="1912.72" y="339.60" width="8.2" height="5.60" fill="#735a84" stroke="#573a6a" stroke-width="1"/><rect x="1927.34" y="312.30" width="8.2" height="32.90" fill="#735a84" stroke="#573a6a" stroke-width="1"/><rect x="1941.96" y="343.70" width="8.2" height="1.50" fill="#735a84" stroke="#573a6a" stroke-width="1"/><rect x="1956.58" y="293.30" width="8.2" height="51.90" fill="#735a84" stroke="#573a6a" stroke-width="1"/><rect x="1971.20" y="323.10" width="8.2" height="22.10" fill="#735a84" stroke="#573a6a" stroke-width="1"/><rect x="1985.82" y="327.20" width="8.2" height="18.00" fill="#735a84" stroke="#573a6a" stroke-width="1"/><rect x="2000.44" y="310.30" width="8.2" height="34.90" fill="#735a84" stroke="#573a6a" stroke-width="1"/><rect x="2015.06" y="327.20" width="8.2" height="18.00" fill="#735a84" stroke="#573a6a" stroke-width="1"/><rect x="2029.68" y="312.30" width="8.2" height="32.90" fill="#735a84" stroke="#573a6a" stroke-width="1"/><rect x="2044.30" y="318.50" width="8.2" height="26.70" fill="#735a84" stroke="#573a6a" stroke-width="1"/><rect x="2058.92" y="329.30" width="8.2" height="15.90" fill="#735a84" stroke="#573a6a" stroke-width="1"/><rect x="2340.70" y="344.40" width="8.2" height="0.80" fill="#4f7a4c" stroke="#1d5a1d" stroke-width="1"/><rect x="2355.32" y="339.60" width="8.2" height="5.60" fill="#4f7a4c" stroke="#1d5a1d" stroke-width="1"/><rect x="2369.94" y="312.30" width="8.2" height="32.90" fill="#4f7a4c" stroke="#1d5a1d" stroke-width="1"/><rect x="2384.56" y="343.70" width="8.2" height="1.50" fill="#4f7a4c" stroke="#1d5a1d" stroke-width="1"/><rect x="2399.18" y="293.30" width="8.2" height="51.90" fill="#4f7a4c" stroke="#1d5a1d" stroke-width="1"/><rect x="2413.80" y="323.10" width="8.2" height="22.10" fill="#4f7a4c" stroke="#1d5a1d" stroke-width="1"/><rect x="2428.42" y="327.20" width="8.2" height="18.00" fill="#4f7a4c" stroke="#1d5a1d" stroke-width="1"/><rect x="2443.04" y="310.30" width="8.2" height="34.90" fill="#4f7a4c" stroke="#1d5a1d" stroke-width="1"/><rect x="2457.66" y="327.20" width="8.2" height="18.00" fill="#4f7a4c" stroke="#1d5a1d" stroke-width="1"/><rect x="2472.28" y="312.30" width="8.2" height="32.90" fill="#4f7a4c" stroke="#1d5a1d" stroke-width="1"/><rect x="2486.90" y="318.50" width="8.2" height="26.70" fill="#4f7a4c" stroke="#1d5a1d" stroke-width="1"/><rect x="2501.52" y="329.30" width="8.2" height="15.90" fill="#4f7a4c" stroke="#1d5a1d" stroke-width="1"/></svg>
<div style="left:490px;top:403px;width:2020px;height:742px;box-sizing:border-box;border:2px solid #d0d0d0;background:#fff;"></div>
<div style="left:492px;top:405px;width:1783px;height:66px;background:#f9f9f9;"></div>
<div style="left:490px;top:471px;width:1787px;height:2px;background:#d4d4d4;"></div>
<div style="left:2275px;top:403px;width:2px;height:70px;background:#c8c8c8;"></div>
<div style="left:2277px;top:403px;width:233px;height:3.5px;background:#1c6e8a;"></div>
<svg style="left:511.5px;top:424.5px;" width="27" height="26" viewBox="0 0 27 26"><g fill="#333"><rect x="0" y="15" width="6" height="11"/><rect x="9.5" y="0" width="6" height="26"/><rect x="19" y="9" width="7" height="17"/></g></svg>
<span style="left:554.4px;top:425.8px;font-size:29.5px;letter-spacing:-0.27px;font-weight:normal;color:#333;">Live Feeds</span>
<svg style="left:2308px;top:428.4px;" width="24" height="24" viewBox="0 0 24 24"><circle cx="12" cy="12" r="10" stroke="#222" stroke-width="2.8" fill="none"/><path d="M12 7 V13 H8" stroke="#222" stroke-width="1.8" fill="none"/></svg>
<span style="left:2339.5px;top:428.8px;font-size:26.0px;letter-spacing:0.53px;font-weight:bold;color:#333;">Case Stats</span>
<svg style="left:0px;top:0px" width="2540" height="1000"><defs><linearGradient id="ag2" gradientUnits="userSpaceOnUse" x1="0" y1="700" x2="0" y2="932"><stop offset="0" stop-color="#cfdde3"/><stop offset="1" stop-color="#b6cad3"/></linearGradient></defs><line x1="559.4" y1="516" x2="559.4" y2="932.5" stroke="#e8e8e8" stroke-width="1.5"/><line x1="767.8" y1="516" x2="767.8" y2="932.5" stroke="#e8e8e8" stroke-width="1.5"/><line x1="976.3" y1="516" x2="976.3" y2="932.5" stroke="#e8e8e8" stroke-width="1.5"/><line x1="1184.8" y1="516" x2="1184.8" y2="932.5" stroke="#e8e8e8" stroke-width="1.5"/><line x1="1393.2" y1="516" x2="1393.2" y2="932.5" stroke="#e8e8e8" stroke-width="1.5"/><line x1="1601.7" y1="516" x2="1601.7" y2="932.5" stroke="#e8e8e8" stroke-width="1.5"/><line x1="1810.1" y1="516" x2="1810.1" y2="932.5" stroke="#e8e8e8" stroke-width="1.5"/><line x1="559.4" y1="932.5" x2="1810.1" y2="932.5" stroke="#e8e8e8" stroke-width="1.5"/><line x1="559.4" y1="858.0" x2="1810.1" y2="858.0" stroke="#e8e8e8" stroke-width="1.5"/><line x1="559.4" y1="783.5" x2="1810.1" y2="783.5" stroke="#e8e8e8" stroke-width="1.5"/><line x1="559.4" y1="709.0" x2="1810.1" y2="709.0" stroke="#e8e8e8" stroke-width="1.5"/><line x1="559.4" y1="634.5" x2="1810.1" y2="634.5" stroke="#e8e8e8" stroke-width="1.5"/><line x1="559.4" y1="560.0" x2="1810.1" y2="560.0" stroke="#e8e8e8" stroke-width="1.5"/><defs><linearGradient id="ag" x1="0" y1="0" x2="0" y2="1"><stop offset="0" stop-color="#d2e0e6"/><stop offset="1" stop-color="#b3c8d1"/></linearGradient></defs><polygon points="559.4,932.5 559.4,932.5 601.1,917.6 642.8,932.5 684.5,872.9 726.2,932.5 767.8,917.6 809.5,932.5 851.2,932.5 892.9,932.5 934.6,932.5 976.3,902.7 1018.0,932.5 1059.7,902.7 1101.4,738.8 1143.1,917.6 1184.8,917.6 1226.4,902.7 1268.1,932.5 1309.8,932.5 1351.5,932.5 1393.2,932.5 1434.9,932.5 1476.6,932.5 1518.3,932.5 1560.0,932.5 1601.7,932.5 1643.3,932.5 1685.0,932.5 1726.7,932.5 1768.4,932.5 1768.4,932.5" fill="none"/><polygon points="559.4,932.5 559.4,932.5 601.1,917.6 642.8,932.5 684.5,872.9 726.2,932.5 767.8,917.6 809.5,932.5 851.2,932.5 892.9,932.5 934.6,932.5 976.3,902.7 1018.0,932.5 1059.7,902.7 1101.4,738.8 1143.1,917.6 1184.8,917.6 1226.4,902.7 1268.1,932.5 1309.8,932.5 1351.5,932.5 1393.2,932.5 1434.9,932.5 1476.6,932.5 1518.3,932.5 1560.0,932.5 1601.7,932.5 1643.3,932.5 1685.0,932.5 1726.7,932.5 1768.4,932.5 1768.4,932.5" fill="url(#ag2)"/><polyline points="559.4,932.5 601.1,917.6 642.8,932.5 684.5,872.9 726.2,932.5 767.8,917.6 809.5,932.5 851.2,932.5 892.9,932.5 934.6,932.5 976.3,902.7 1018.0,932.5 1059.7,902.7 1101.4,738.8 1143.1,917.6 1184.8,917.6 1226.4,902.7 1268.1,932.5 1309.8,932.5 1351.5,932.5 1393.2,932.5 1434.9,932.5 1476.6,932.5 1518.3,932.5 1560.0,932.5 1601.7,932.5 1643.3,932.5 1685.0,932.5 1726.7,932.5 1768.4,932.5" fill="none" stroke="#4e8197" stroke-width="2.2" stroke-linejoin="miter"/></svg>
<span style="left:527.2px;top:922.4px;font-size:24.0px;letter-spacing:0.00px;font-weight:normal;color:#555;">0</span>
<span style="left:527.2px;top:847.9px;font-size:24.0px;letter-spacing:0.00px;font-weight:normal;color:#555;">5</span>
<span style="left:514.1px;top:773.4px;font-size:24.0px;letter-spacing:-0.29px;font-weight:normal;color:#555;">10</span>
<span style="left:513.9px;top:698.9px;font-size:24.0px;letter-spacing:0.19px;font-weight:normal;color:#555;">15</span>
<span style="left:514.0px;top:624.4px;font-size:24.0px;letter-spacing:-0.19px;font-weight:normal;color:#555;">20</span>
<span style="left:514.2px;top:549.9px;font-size:24.0px;letter-spacing:-0.06px;font-weight:normal;color:#555;">25</span>
<span style="left:553.6px;top:961.8px;font-size:21.5px;letter-spacing:0.00px;font-weight:normal;color:#555;">0</span>
<span style="left:762.0px;top:961.8px;font-size:21.5px;letter-spacing:0.00px;font-weight:normal;color:#555;">5</span>
<span style="left:964.2px;top:961.8px;font-size:21.5px;letter-spacing:0.00px;font-weight:normal;color:#555;transform:scaleX(0.9721);transform-origin:1.50px 0;">10</span>
<span style="left:1172.6px;top:961.8px;font-size:21.5px;letter-spacing:-0.16px;font-weight:normal;color:#555;">15</span>
<span style="left:1381.4px;top:961.8px;font-size:21.5px;letter-spacing:0.00px;font-weight:normal;color:#555;transform:scaleX(0.9740);transform-origin:1.00px 0;">20</span>
<span style="left:1589.9px;top:961.8px;font-size:21.5px;letter-spacing:-0.43px;font-weight:normal;color:#555;">25</span>
<span style="left:1798.4px;top:961.8px;font-size:21.5px;letter-spacing:0.00px;font-weight:normal;color:#555;transform:scaleX(0.9726);transform-origin:0.75px 0;">30</span>
<span style="left:596.5px;top:540px;font-size:25.0px;letter-spacing:0.49px;font-weight:bold;color:#333;">Live switch</span>
<div style="left:752px;top:534.6px;width:105px;height:34.8px;box-sizing:border-box;border:2px solid #c9c9c9;border-radius:18px;background:linear-gradient(#e6e6e6,#f6f6f6 40%,#fff);"></div>
<span style="left:798.0px;top:542.4px;font-size:20.5px;letter-spacing:0.00px;font-weight:normal;color:#555;transform:scaleX(1.0369);transform-origin:1.00px 0;">OFF</span>
<div style="left:752px;top:531.3px;width:41.4px;height:41.4px;box-sizing:border-box;border:2px solid #c2c2c2;border-radius:50%;background:linear-gradient(#fafafa,#ececec);box-shadow:1px 2px 3px rgba(0,0,0,0.25);"></div>
<svg style="left:764.7px;top:544px;" width="16" height="16" viewBox="0 0 16 16"><path d="M2.5 2.5 L13.5 13.5 M13.5 2.5 L2.5 13.5" stroke="#c8001e" stroke-width="4.2"/></svg>
<span style="left:1829.5px;top:514.2px;font-size:26.5px;letter-spacing:0.01px;font-weight:normal;color:#555;">Closed Cases</span>
<span style="left:2430.8px;top:514.2px;font-size:26.5px;letter-spacing:0.00px;font-weight:normal;color:#555;transform:scaleX(1.1204);transform-origin:1.25px 0;">6/28</span>
<div style="left:1830.8px;top:552px;width:656.2px;height:13.100000000000023px;background:#ededed;border-radius:2px;box-shadow:inset 0 1px 2px rgba(0,0,0,0.1);"></div>
<div style="left:1830.8px;top:552px;width:136.9000000000001px;height:13.100000000000023px;background:#3d4145;border-radius:2px 0 0 2px;"></div>
<span style="left:1830.3px;top:604.4px;font-size:27.0px;letter-spacing:0.00px;font-weight:normal;color:#555;transform:scaleX(1.0648);transform-origin:0.50px 0;">Transfered</span>
<span style="left:2454.7px;top:604.4px;font-size:27.0px;letter-spacing:0.00px;font-weight:normal;color:#555;transform:scaleX(1.1327);transform-origin:2.00px 0;">13</span>
<div style="left:1830.8px;top:641.8px;width:656.2px;height:13.0px;background:#ededed;border-radius:2px;box-shadow:inset 0 1px 2px rgba(0,0,0,0.1);"></div>
<div style="left:1830.8px;top:641.8px;width:301.79999999999995px;height:13.0px;background:#4d849f;border-radius:2px 0 0 2px;"></div>
<span style="left:1829.5px;top:694.6px;font-size:25.0px;letter-spacing:0.00px;font-weight:normal;color:#555;transform:scaleX(1.0618);transform-origin:1.25px 0;">SLA Due</span>
<span style="left:2448.5px;top:694.6px;font-size:25.0px;letter-spacing:0.00px;font-weight:normal;color:#555;transform:scaleX(1.0949);transform-origin:1.00px 0;">3%</span>
<div style="left:1830.8px;top:731.5px;width:656.2px;height:13.0px;background:#ededed;border-radius:2px;box-shadow:inset 0 1px 2px rgba(0,0,0,0.1);"></div>
<div style="left:1830.8px;top:731.5px;width:17.700000000000045px;height:13.0px;background:#4d849f;border-radius:2px 0 0 2px;"></div>
<span style="left:1829.5px;top:784.3px;font-size:25.0px;letter-spacing:0.00px;font-weight:normal;color:#555;transform:scaleX(1.0940);transform-origin:1.25px 0;">SLA Overdue</span>
<span style="left:2448.5px;top:784.3px;font-size:25.0px;letter-spacing:0.00px;font-weight:normal;color:#555;transform:scaleX(1.0949);transform-origin:1.00px 0;">3%</span>
<div style="left:1830.8px;top:821.2px;width:656.2px;height:13.0px;background:#ededed;border-radius:2px;box-shadow:inset 0 1px 2px rgba(0,0,0,0.1);"></div>
<div style="left:1830.8px;top:821.2px;width:17.700000000000045px;height:13.0px;background:#3d4145;border-radius:2px 0 0 2px;"></div>
<div style="left:1830.8px;top:866.8px;width:316.20000000000005px;height:65.70000000000005px;box-sizing:border-box;border:2px solid #dedede;border-radius:4px;background:#fff;"></div>
<span style="left:1914.1px;top:886.2px;font-size:28.5px;letter-spacing:-0.39px;font-weight:normal;color:#8a8a8a;">Create Task</span>
<div style="left:2168.8px;top:866.8px;width:318.1999999999998px;height:65.70000000000005px;box-sizing:border-box;border:2px solid #cfcfcf;border-bottom-color:#b5b5b5;border-radius:4px;background:#fff;"></div>
<span style="left:2246.2px;top:886.2px;font-size:28.5px;letter-spacing:-0.01px;font-weight:normal;color:#333;">Report a bug</span>
<div style="left:492px;top:1006.5px;width:2016px;height:2.0px;background:#dcdcdc;"></div>
<div style="left:995.5px;top:1008.5px;width:2.0px;height:134.0px;background:#dddddd;"></div>
<div style="left:1499.2px;top:1008.5px;width:2.0px;height:134.0px;background:#dddddd;"></div>
<div style="left:2004px;top:1008.5px;width:2px;height:134.0px;background:#dddddd;"></div>
<div style="left:490px;top:1142px;width:2020px;height:3px;background:#cdcdcd;"></div>
<svg style="left:0px;top:0px" width="2540" height="1200"><circle cx="563" cy="1075" r="47" stroke="#f3f3f3" stroke-width="10" fill="none"/><path d="M516.00 1075.00 A47 47 0 0 1 551.31 1029.48" stroke="#a8741f" stroke-width="10" fill="none"/><circle cx="1068.5" cy="1074.5" r="47" stroke="#f3f3f3" stroke-width="10" fill="none"/><path d="M1021.50 1074.50 A47 47 0 0 1 1068.50 1027.50" stroke="#6b7d2e" stroke-width="10" fill="none"/><circle cx="1570.6" cy="1074.5" r="47" stroke="#f3f3f3" stroke-width="10" fill="none"/><path d="M1523.60 1074.50 A47 47 0 0 1 1558.91 1028.98" stroke="#4e8499" stroke-width="10" fill="none"/><circle cx="2076.4" cy="1075" r="47" stroke="#f3f3f3" stroke-width="10" fill="none"/><path d="M2029.40 1075.00 A47 47 0 0 1 2096.41 1032.47" stroke="#393939" stroke-width="10" fill="none"/></svg>
<span style="left:535.5px;top:1063.6px;font-size:25.0px;letter-spacing:-0.23px;font-weight:bold;color:#333;">21 %</span>
<span style="left:635.0px;top:1056px;font-size:25.0px;letter-spacing:0.00px;font-weight:normal;color:#4e4e4e;transform:scaleX(0.9154);transform-origin:1.25px 0;">CLOSED</span>
<svg style="left:736px;top:1058.8px;" width="22" height="12" viewBox="0 0 22 12"><path d="M11 0 L22 12 H0Z" fill="#e8141e"/></svg>
<span style="left:1038.7px;top:1063.6px;font-size:25.0px;letter-spacing:0.13px;font-weight:bold;color:#333;">25 %</span>
<span style="left:1139.5px;top:1055.3px;font-size:25.0px;letter-spacing:0.00px;font-weight:normal;color:#4e4e4e;transform:scaleX(0.9063);transform-origin:2.00px 0;">BACK OFFICE</span>
<svg style="left:1297.4px;top:1058.5px;" width="23" height="12" viewBox="0 0 23 12"><path d="M0 0 H23 L11.5 12Z" fill="#2ea82e"/></svg>
<span style="left:1543.0px;top:1063.6px;font-size:25.0px;letter-spacing:0.13px;font-weight:bold;color:#333;">21 %</span>
<span style="left:1643.5px;top:1056px;font-size:24.5px;letter-spacing:0.00px;font-weight:normal;color:#4e4e4e;transform:scaleX(0.8810);transform-origin:1.25px 0;">SELF SERVICE</span>
<svg style="left:1805px;top:1058.5px;" width="22" height="12" viewBox="0 0 22 12"><path d="M11 0 L22 12 H0Z" fill="#2ea82e"/></svg>
<span style="left:2047.5px;top:1063.6px;font-size:25.0px;letter-spacing:-0.02px;font-weight:bold;color:#333;">32 %</span>
<span style="left:2147.2px;top:1054.9px;font-size:26.0px;letter-spacing:0.00px;font-weight:normal;color:#4e4e4e;transform:scaleX(0.9128);transform-origin:2.00px 0;">NEW</span>
<svg style="left:2209.4px;top:1058.7px;" width="23" height="12" viewBox="0 0 23 12"><path d="M0 0 H23 L11.5 12Z" fill="#2ea82e"/></svg>
</body></html>
